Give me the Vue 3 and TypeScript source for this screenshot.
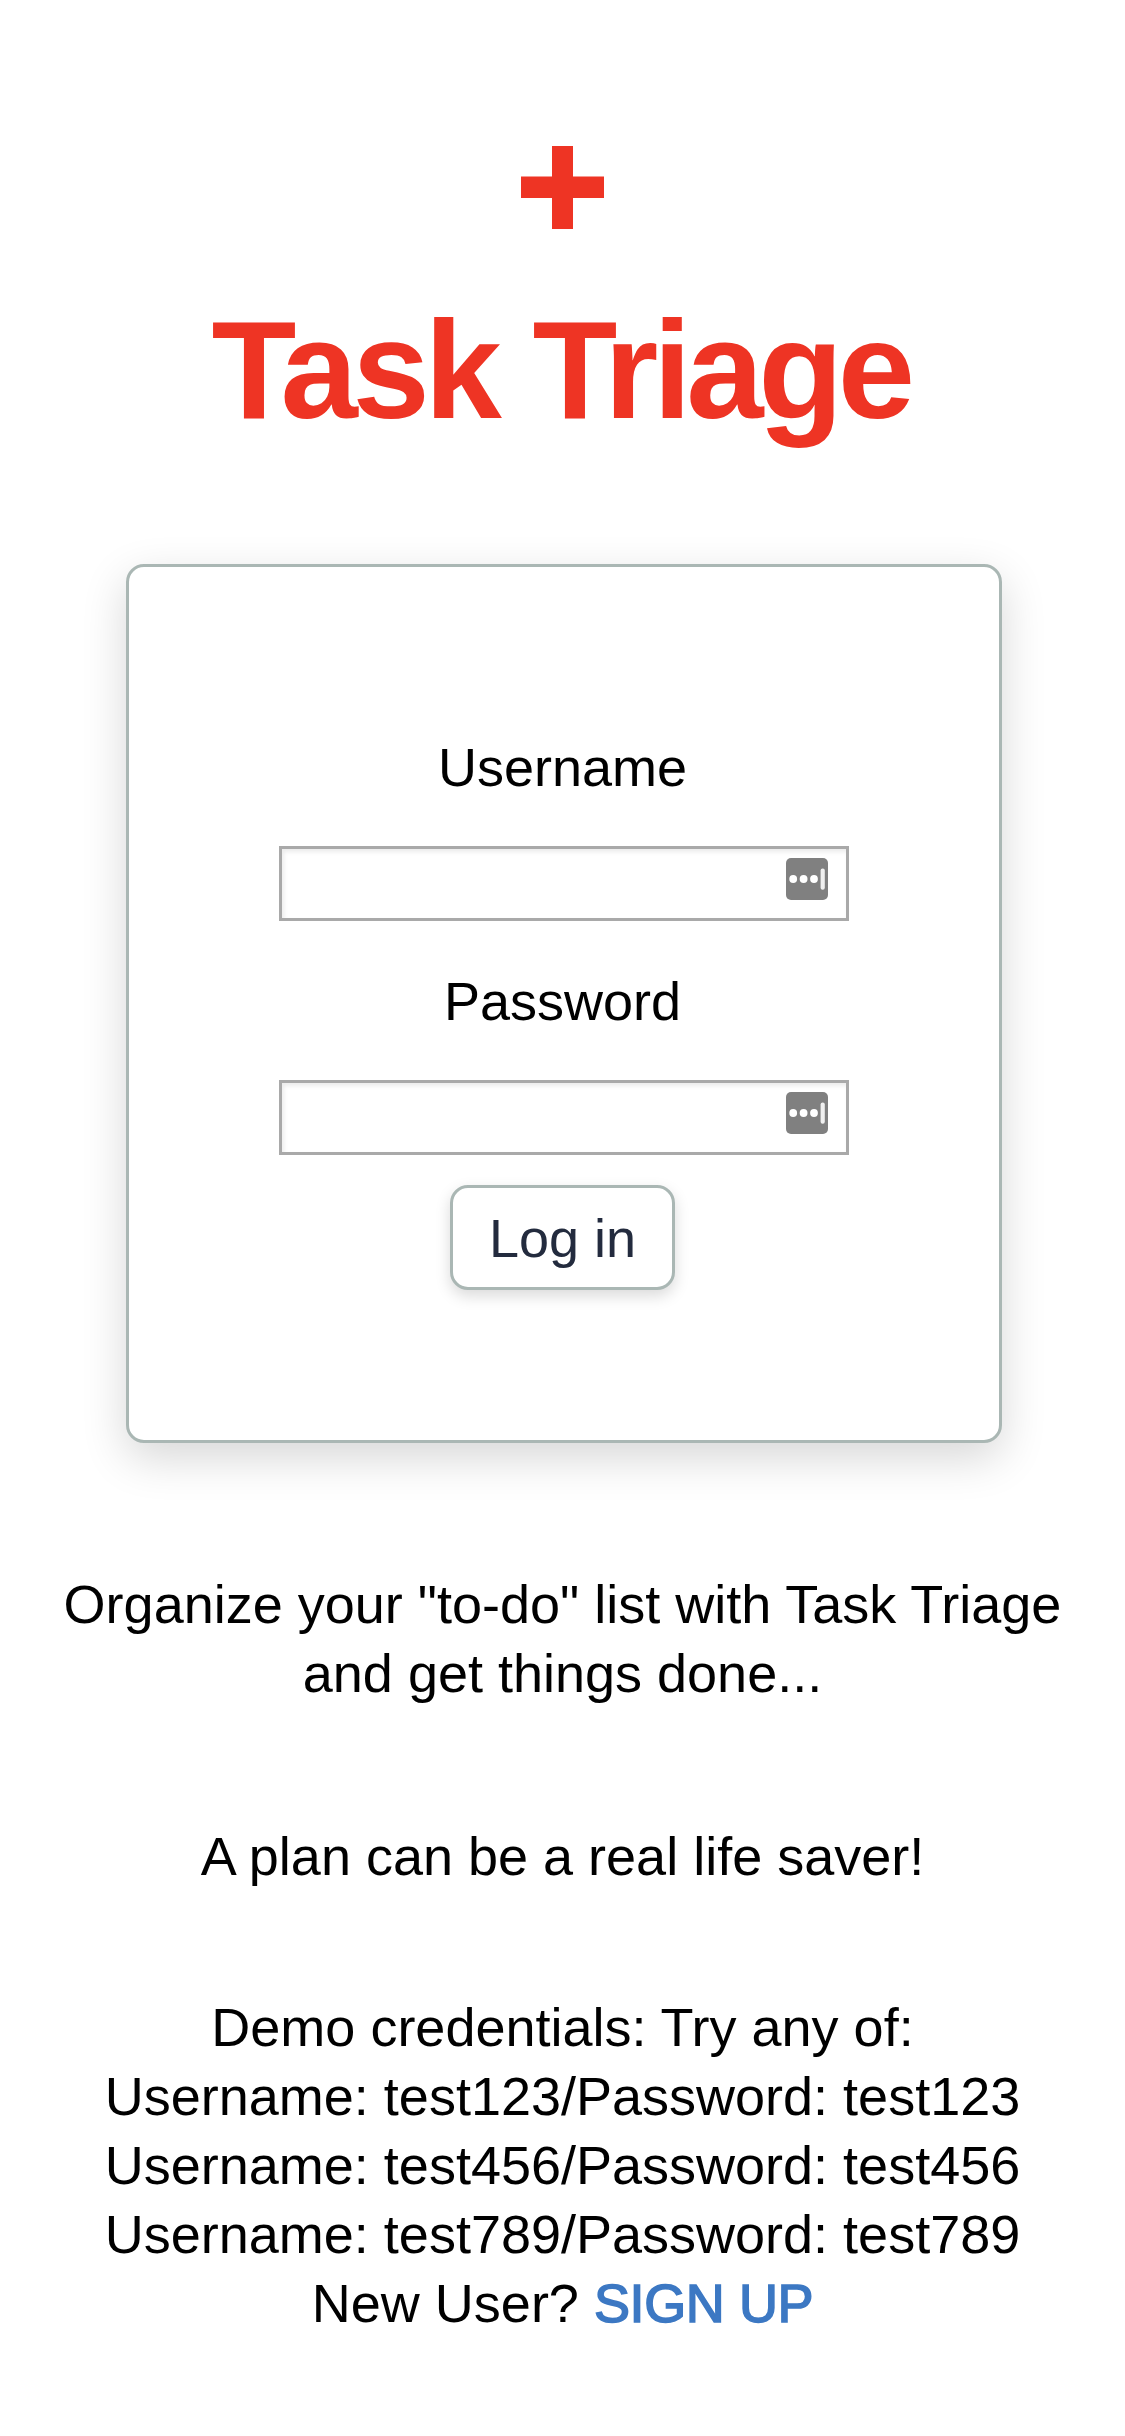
<script setup lang="ts">
import { ref } from 'vue'

interface Field {
  id: string
  label: string
  type: string
}

const fields: Field[] = [
  { id: 'username', label: 'Username', type: 'text' },
  { id: 'password', label: 'Password', type: 'password' },
]

const values = ref<Record<string, string>>({ username: '', password: '' })
const demoAccounts: string[] = ['test123', 'test456', 'test789']
</script>

<template>
  <main class="page">
    <svg class="cross" viewBox="0 0 83 83" aria-hidden="true">
      <path d="M31 0h21v30.5h31v21.5H52v31H31V52H0V30.5h31z" />
    </svg>
    <h1 class="title">Task Triage</h1>

    <form class="card" @submit.prevent>
      <div v-for="field in fields" :key="field.id" class="field">
        <label :for="field.id">{{ field.label }}</label>
        <div class="control">
          <input :id="field.id" v-model="values[field.id]" :type="field.type" />
          <svg class="autofill" viewBox="0 0 42 42" aria-hidden="true">
            <rect width="42" height="42" rx="5" fill="#808080" />
            <circle cx="7.2" cy="21" r="3.9" />
            <circle cx="17.6" cy="21" r="3.9" />
            <circle cx="28" cy="21" r="3.9" />
            <rect x="34.6" y="10.4" width="4.2" height="21.4" rx="2" fill="#f0f0f0" />
          </svg>
        </div>
      </div>
      <button type="submit" class="login">Log in</button>
    </form>

    <p class="intro">Organize your "to-do" list with Task Triage<br />and get things done...</p>
    <p class="tagline">A plan can be a real life saver!</p>
    <p class="demo">
      Demo credentials: Try any of:<br />
      <template v-for="name in demoAccounts" :key="name">
        Username: {{ name }}/Password: {{ name }}<br />
      </template>
      New User? <a class="signup" href="#">SIGN UP</a>
    </p>
  </main>
</template>

<style>
body {
  margin: 0;
  background: #fff;
}
</style>

<style scoped>
.page {
  box-sizing: border-box;
  display: flex;
  flex-direction: column;
  align-items: center;
  width: 1125px;
  height: 2436px;
  padding-top: 146px;
  overflow: hidden;
  color: #000;
  font: 54px/69px "Liberation Sans", Arial, sans-serif;
  text-align: center;
}

.cross {
  display: block;
  flex: none;
  width: 83px;
  height: 83px;
  fill: #ee3424;
}

.title {
  margin: 61px 4px 0 0;
  color: #ee3424;
  font-size: 139px;
  line-height: 160px;
  font-weight: 700;
  letter-spacing: -5.4px;
  word-spacing: 3px;
  white-space: nowrap;
}

.card {
  box-sizing: border-box;
  display: flex;
  flex-direction: column;
  align-items: center;
  width: 876px;
  height: 879px;
  margin: 114px 0 0 3px;
  padding: 166px 0 0;
  border: 3px solid #aab7b4;
  border-radius: 18px;
  background: #fff;
  box-shadow: 0 15px 45px rgba(0, 0, 0, 0.16);
  flex: none;
}

.field {
  width: 570px;
}

.field + .field {
  margin-top: 46px;
}

.field label {
  display: block;
  margin-right: 3px;
}

.control {
  position: relative;
  height: 75px;
  margin-top: 44px;
}

.control input {
  box-sizing: border-box;
  display: block;
  width: 100%;
  height: 75px;
  margin: 0;
  padding: 0 70px 0 8px;
  border: 3px solid #a9a9a9;
  border-radius: 0;
  outline: 0;
  background: #fff;
  box-shadow: inset 2px 3px 4px rgba(0, 0, 0, 0.08);
  font: inherit;
}

.autofill {
  position: absolute;
  top: 12px;
  right: 21px;
  width: 42px;
  height: 42px;
  fill: #fff;
}

.login {
  box-sizing: border-box;
  width: 225px;
  height: 105px;
  margin: 30px 3px 0 0;
  padding: 16px 0 14px;
  border: 3px solid #aab7b4;
  border-radius: 18px;
  background: #fff;
  box-shadow: 0 6px 15px rgba(0, 0, 0, 0.15);
  color: #232b3e;
  font: inherit;
}

.intro,
.tagline,
.demo {
  margin: 0;
  white-space: nowrap;
}

.intro {
  margin-top: 127px;
}

.tagline {
  margin-top: 114px;
}

.demo {
  margin-top: 102px;
}

.signup {
  color: #3c78c3;
  text-decoration: none;
  letter-spacing: -0.4px;
  -webkit-text-stroke: 1.6px #3c78c3;
}
</style>
